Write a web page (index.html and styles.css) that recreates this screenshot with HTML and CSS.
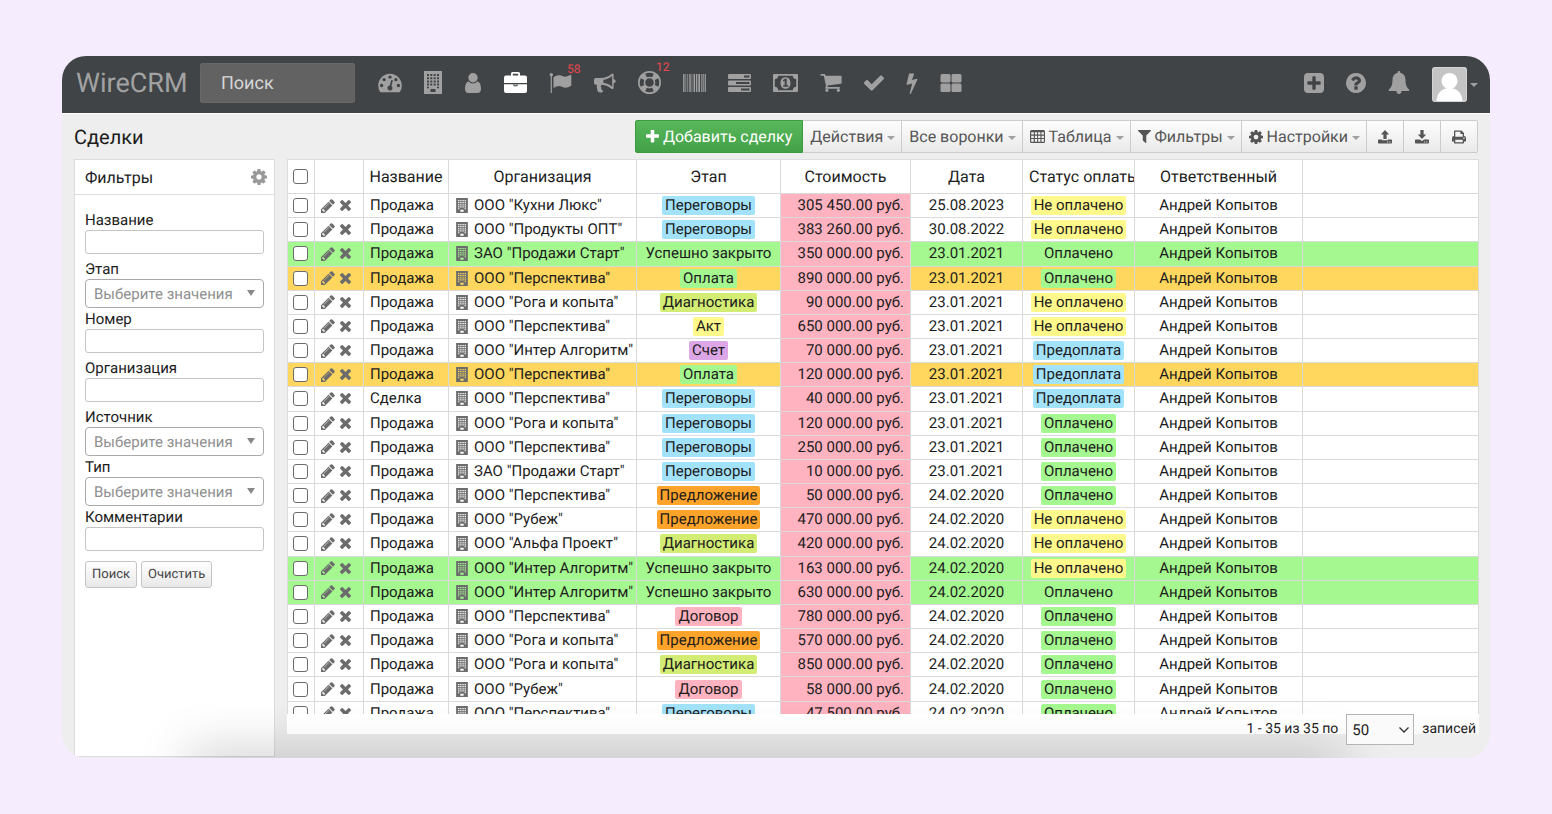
FILE: index.html
```html
<!DOCTYPE html>
<html lang="ru">
<head>
  <meta charset="UTF-8" />
  <title>WireCRM - Сделки</title>
  <meta name="viewport" content="width=device-width, initial-scale=1.0" />
  <link rel="stylesheet" href="styles.css">
</head>
<body>

<!-- Иконки -->
<svg class="sprite" aria-hidden="true">
  <symbol id="i-gauge" viewBox="0 200 1792 1520"><path d="M384 1152q0-53-37.5-90.5t-90.5-37.5-90.5 37.5-37.5 90.5 37.5 90.5 90.5 37.5 90.5-37.5 37.5-90.5zm192-448q0-53-37.5-90.5t-90.5-37.5-90.5 37.5-37.5 90.5 37.5 90.5 90.5 37.5 90.5-37.5 37.5-90.5zm428 481l101-382q6-26-7.5-48.5t-38.5-29.5-48 6.5-30 39.5l-101 382q-60 5-107 43.5t-63 98.5q-20 77 20 146t117 89 146-20 89-117q16-60-6-117t-72-91zm660-33q0-53-37.5-90.5t-90.5-37.5-90.5 37.5-37.5 90.5 37.5 90.5 90.5 37.5 90.5-37.5 37.5-90.5zm-640-640q0-53-37.5-90.5t-90.5-37.5-90.5 37.5-37.5 90.5 37.5 90.5 90.5 37.5 90.5-37.5 37.5-90.5zm448 192q0-53-37.5-90.5t-90.5-37.5-90.5 37.5-37.5 90.5 37.5 90.5 90.5 37.5 90.5-37.5 37.5-90.5zm320 448q0 261-141 483-19 29-54 29h-1402q-35 0-54-29-141-221-141-483 0-182 71-348t191-286 286-191 348-71 348 71 286 191 191 286 71 348z"/></symbol>
  <symbol id="i-building" viewBox="0 0 18 23"><path fill-rule="evenodd" d="M0 0h18v23H0zM3 3v2h2V3zm3.300 0v2h2V3zm3.400 0v2h2V3zM13 3v2h2V3zM3 6.200v2h2v-2zm3.300 0v2h2v-2zm3.400 0v2h2v-2zm3.300 0v2h2v-2zM3 9.400v2h2v-2zm3.300 0v2h2v-2zm3.400 0v2h2v-2zm3.300 0v2h2v-2zM3 12.600v2h2v-2zm3.300 0v2h2v-2zm3.400 0v2h2v-2zm3.300 0v2h2v-2zM3 15.800v1.500h2v-1.500zm10 0v1.500h2v-1.500zM6.500 18v3h5v-3z"/></symbol>
  <symbol id="i-user" viewBox="0 0 16 20"><circle cx="8" cy="4.700" r="4.700"/><path d="M3.600 8.300C1.200 9 0 12 0 15.500 0 18.500 1.200 20 3.500 20h9c2.300 0 3.500-1.500 3.500-4.500 0-3.500-1.200-6.500-3.600-7.200C11.300 9.700 9.800 10.500 8 10.500s-3.300-.8-4.400-2.200z"/></symbol>
  <symbol id="i-case" viewBox="0 0 23 21"><path fill-rule="evenodd" d="M7 3.500V1.500Q7 0 8.500 0h6Q16 0 16 1.500v2h5q2 0 2 2V11H0V5.500q0-2 2-2zm1.800 0h5.400V1.800H8.800zM0 12.300h9.500v2h4v-2H23V19q0 2-2 2H2q-2 0-2-2zm10.500 0h2v1h-2z"/></symbol>
  <symbol id="i-flag" viewBox="0 0 22 20"><circle cx="1.800" cy="1.800" r="1.700"/><path d="M1.200 2h1.200v18H1.200zM4 4.200C6.500 2.500 9 1.600 11.500 2.600c2.500 1.200 4.500 1.600 7.500.2l1.800-.9q1-.3 1 .8v10c-3.500 2.200-6.300 2.600-9.300 1.100-2.800-1.400-5.200-.9-8.500 1.200z"/></symbol>
  <symbol id="i-horn" viewBox="0 0 23 20"><path fill-rule="evenodd" d="M20.500 6.200q2.200 0 2.200 2t-2.200 2V15q0 1.500-1.500 1.500C15.500 13.600 12 12 8.200 11.700c-1.400.8-1.400 2-.3 3.200-.8 1.300.2 2.400 1.800 3.500-1 2-4.200 1.900-5.600.7C3.300 16.500 2.500 14.500 3.100 11.700H2q-2 0-2-2v-3q0-2 2-2h5C12 4.700 15.500 3 19 0q1.500 0 1.500 1.500zM19 2.600c-3 2.300-6 3.600-9.200 4v3.200c3.200.4 6.200 1.700 9.200 4z"/></symbol>
  <symbol id="i-ring" viewBox="0 0 24 24"><path fill-rule="evenodd" d="M12 0a12 12 0 1 0 0 24 12 12 0 0 0 0-24zm0 7.500a4.500 4.500 0 1 1 0 9 4.500 4.500 0 0 1 0-9zM7.500 2.900Q12 .8 16.500 2.900L14.700 6.500Q12 5.400 9.300 6.500zm0 18.200Q12 23.200 16.500 21.100l-1.800-3.600q-2.700 1.100-5.400 0zM2.900 7.500Q.8 12 2.900 16.500l3.600-1.800q-1.100-2.700 0-5.400zm18.200 0Q23.200 12 21.100 16.500l-3.600-1.800q1.100-2.700 0-5.400z"/></symbol>
  <symbol id="i-barcode" viewBox="0 0 24 19"><path d="M0 0h1.500v19H0zM2.500 0h.8v19h-.8zM4.500 0h.8v19h-.8zM6.500 0H8v19H6.500zM9 0h.7v19H9zM11 0h1.500v19H11zM13.500 0h1.500v19h-1.500zM16 0h1.800v19H16zM18.800 0h.8v19h-.8zM20.500 0h1.200v19h-1.200zM22.700 0H24v19h-1.300z"/></symbol>
  <symbol id="i-tasks" viewBox="0 0 23 18"><path fill-rule="evenodd" d="M1 0h21q1 0 1 1v3q0 1-1 1H1Q0 5 0 4V1q0-1 1-1zm15 1.600v1.800h5.500V1.600zM1 6.500h21q1 0 1 1v3q0 1-1 1H1q-1 0-1-1v-3q0-1 1-1zm7 1.600v1.800h13.500V8.100zM1 13h21q1 0 1 1v3q0 1-1 1H1q-1 0-1-1v-3q0-1 1-1zm12 1.600v1.800h8.500v-1.800z"/></symbol>
  <symbol id="i-money" viewBox="0 0 25 18"><path fill-rule="evenodd" d="M1 0h23q1 0 1 1v16q0 1-1 1H1q-1 0-1-1V1q0-1 1-1zm4.200 1.800Q5 5 1.800 5.200v7.600Q5 13 5.200 16.200h14.600q.2-3.200 3.400-3.400V5.200Q20 5 19.800 1.800zM12.500 3.200c3.500 0 5 3 5 5.800s-1.500 5.800-5 5.800-5-3-5-5.800 1.500-5.800 5-5.800zm-2.800 3 1 1.200 1-.7v4.500h-1.500v1.500h5v-1.500h-1.500V4.700h-1.800z"/></symbol>
  <symbol id="i-cart" viewBox="64 256 1664 1408"><path d="M704 1536q0 52-38 90t-90 38-90-38-38-90 38-90 90-38 90 38 38 90zm896 0q0 52-38 90t-90 38-90-38-38-90 38-90 90-38 90 38 38 90zm128-1088v512q0 24-16.500 42.500t-40.500 21.500l-1044 122q13 60 13 70 0 16-24 64h920q26 0 45 19t19 45-19 45-45 19h-1024q-26 0-45-19t-19-45q0-11 8-31.500t16-36 21.500-40 15.500-29.500l-177-823h-204q-26 0-45-19t-19-45 19-45 45-19h256q16 0 28.500 6.500t19.500 15.500 13 24.500 8 26 5.500 29.500 4.500 26h1201q26 0 45 19t19 45z"/></symbol>
  <symbol id="i-check" viewBox="121 334 1550 1188"><path d="M1671 566q0 40-28 68l-724 724-136 136q-28 28-68 28t-68-28l-136-136-362-362q-28-28-28-68t28-68l136-136q28-28 68-28t68 28l294 295 656-657q28-28 68-28t68 28l136 136q28 28 28 68z"/></symbol>
  <symbol id="i-bolt" viewBox="440 0 910 1792"><path d="M1333 566q18 20 7 44l-540 1157q-13 25-42 25-4 0-14-2-17-5-25.500-19t-4.500-30l197-808-406 101q-4 1-12 1-18 0-31-11-18-15-13-39l201-825q4-14 16-23t28-9h328q19 0 32 12.500t13 29.500q0 8-5 18l-171 463 396-98q8-2 12-2 19 0 34 15z"/></symbol>
  <symbol id="i-tiles" viewBox="0 0 21 18"><rect width="10" height="8.500" rx="1.500"/><rect x="11" width="10" height="8.500" rx="1.500"/><rect y="9.500" width="10" height="8.500" rx="1.500"/><rect x="11" y="9.500" width="10" height="8.500" rx="1.500"/></symbol>
  <symbol id="i-plus-square" viewBox="128 128 1536 1536"><path d="M1408 960v-128q0-26-19-45t-45-19h-320v-320q0-26-19-45t-45-19h-128q-26 0-45 19t-19 45v320h-320q-26 0-45 19t-19 45v128q0 26 19 45t45 19h320v320q0 26 19 45t45 19h128q26 0 45-19t19-45v-320h320q26 0 45-19t19-45zm256-544v960q0 119-84.500 203.500t-203.500 84.500h-960q-119 0-203.500-84.500t-84.500-203.500v-960q0-119 84.500-203.500t203.500-84.500h960q119 0 203.500 84.500t84.500 203.500z"/></symbol>
  <symbol id="i-help" viewBox="128 128 1536 1536"><path d="M1024 1376v-192q0-14-9-23t-23-9h-192q-14 0-23 9t-9 23v192q0 14 9 23t23 9h192q14 0 23-9t9-23zm256-672q0-88-55.500-163t-138.500-116-170-41q-243 0-371 213-15 24 8 42l132 100q7 6 19 6 16 0 25-12 53-68 86-92 34-24 86-24 48 0 85.500 26t37.500 59q0 38-20 61t-68 45q-63 28-115.500 86.500t-52.500 125.500v36q0 14 9 23t23 9h192q14 0 23-9t9-23q0-19 21.500-49.500t54.500-49.500q32-18 49-28.500t46-35 44.500-48 28-60.500 12.500-81zm384 192q0 209-103 385.500t-279.500 279.500-385.500 103-385.500-103-279.500-279.500-103-385.500 103-385.500 279.500-279.500 385.500-103 385.500 103 279.500 279.500 103 385.500z"/></symbol>
  <symbol id="i-bell" viewBox="0 0 20 22"><path d="M10 0q1.300 0 1.300 1.300v.6C14.800 2.500 16 5 16.200 8.500c.2 5 1.300 7.500 3.800 9.500q0 1.200-1.200 1.200H12.500Q12.200 22 10 22t-2.500-2.800H1.200Q0 19.200 0 18c2.500-2 3.600-4.500 3.800-9.500C4 5 5.200 2.500 8.700 1.900v-.6Q8.700 0 10 0z"/></symbol>
  <symbol id="i-plus" viewBox="192 192 1408 1408"><path d="M1600 736v192q0 40-28 68t-68 28h-416v416q0 40-28 68t-68 28h-192q-40 0-68-28t-28-68v-416h-416q-40 0-68-28t-28-68v-192q0-40 28-68t68-28h416v-416q0-40 28-68t68-28h192q40 0 68 28t28 68v416h416q40 0 68 28t28 68z"/></symbol>
  <symbol id="i-table" viewBox="0 0 15 13"><path fill-rule="evenodd" d="M1.500 0h12Q15 0 15 1.500v10q0 1.500-1.500 1.500h-12Q0 13 0 11.500v-10Q0 0 1.500 0zM1.200 2.300v2.300h2.500V2.300zm3.700 0v2.300h2.200V2.300zm3.200 0v2.300h2.300V2.300zm3.400 0v2.300h2.400V2.300zM1.200 5.700V8h2.500V5.700zm3.700 0V8h2.200V5.700zm3.200 0V8h2.300V5.700zm3.400 0V8h2.400V5.700zM1.200 9.100v2.600h2.500V9.100zm3.700 0v2.600h2.200V9.100zm3.200 0v2.600h2.300V9.100zm3.400 0v2.600h2.400V9.100z"/></symbol>
  <symbol id="i-filter" viewBox="192 256 1408 1408"><path d="M1595 295q17 41-14 70l-493 493v742q0 42-39 59-13 5-25 5-27 0-45-19l-256-256q-19-19-19-45v-486l-493-493q-31-29-14-70 17-39 59-39h1280q42 0 59 39z"/></symbol>
  <symbol id="i-cog" viewBox="128 128 1536 1536"><path d="M1152 896q0-106-75-181t-181-75-181 75-75 181 75 181 181 75 181-75 75-181zm512-109v222q0 12-8 23t-20 13l-185 28q-19 54-39 91 35 50 107 138 10 12 10 25t-9 23q-27 37-99 108t-94 71q-12 0-26-9l-138-108q-44 23-91 38-16 136-29 186-7 28-36 28h-222q-14 0-24.500-8.500t-11.500-21.500l-28-184q-49-16-90-37l-141 107q-10 9-25 9-14 0-25-11-126-114-165-168-7-10-7-23 0-12 8-23 15-21 51-66.500t54-70.500q-27-50-41-99l-183-27q-13-2-21-12.500t-8-23.500v-222q0-12 8-23t19-13l186-28q14-46 39-92-40-57-107-138-10-12-10-24 0-10 9-23 26-36 98.500-107.500t94.500-71.500q13 0 26 10l138 107q44-23 91-38 16-136 29-186 7-28 36-28h222q14 0 24.500 8.500t11.500 21.500l28 184q49 16 90 37l142-107q9-9 24-9 13 0 25 10 129 119 165 170 7 8 7 22 0 12-8 23-15 21-51 66.500t-54 70.500q26 50 41 98l183 28q13 2 21 12.500t8 23.500z"/></symbol>
  <symbol id="i-upload" viewBox="0 0 14 14"><path fill-rule="evenodd" d="M7 0l4.200 4.500H8.600V9H5.400V4.500H2.800zM.8 9.500h3.400v.8h5.600v-.8h3.400q.8 0 .8.800v2.500q0 .8-.8.800H.8q-.8 0-.8-.8v-2.500q0-.8.8-.8zm8.400 2v1h1v-1zm2.200 0v1h1v-1z"/></symbol>
  <symbol id="i-download" viewBox="0 0 14 14"><path fill-rule="evenodd" d="M5.400 0h3.200v4.500h2.600L7 9 2.800 4.500h2.600zM.8 9.500h4l2.200 1.500 2.200-1.500h4q.8 0 .8.800v2.500q0 .8-.8.800H.8q-.8 0-.8-.8v-2.500q0-.8.8-.8zm8.400 2v1h1v-1zm2.200 0v1h1v-1z"/></symbol>
  <symbol id="i-print" viewBox="0 0 14 14"><path fill-rule="evenodd" d="M2 6V1.200Q2 .5 2.700.5H9.500L12 3v3q2 .2 2 2v3.200q0 .3-.3.300H12v1.300q0 .7-.7.7H2.700Q2 13.500 2 12.800v-1.300H.3Q0 11.500 0 11.200V8q0-1.800 2-2zm1.300.8h7.400V4H9q-.6 0-.6-.6V1.800H3.300zm0 3v2.400h7.400V9.800zm8-2.300v1.200h1.300V7.500z"/></symbol>
  <symbol id="i-pencil" viewBox="128 128 1536 1536"><path d="M491 1536l91-91-235-235-91 91v107h128v128h107zm523-928q0-22-22-22-10 0-17 7l-542 542q-7 7-7 17 0 22 22 22 10 0 17-7l542-542q7-7 7-17zm-54-192l416 416-832 832h-416v-416zm683 96q0 53-37 90l-166 166-416-416 166-165q36-38 90-38 53 0 91 38l235 234q37 39 37 91z"/></symbol>
  <symbol id="i-times" viewBox="302 366 1188 1188"><path d="M1490 1322q0 40-28 68l-136 136q-28 28-68 28t-68-28l-294-294-294 294q-28 28-68 28t-68-28l-136-136q-28-28-28-68t28-68l294-294-294-294q-28-28-28-68t28-68l136-136q28-28 68-28t68 28l294 294 294-294q28-28 68-28t68 28l136 136q28 28 28 68t-28 68l-294 294 294 294q28 28 28 68z"/></symbol>
</svg>

<div class="window">
  <header class="topbar">
    <a href="#" class="logo">WireCRM</a>
    <input type="search" class="search" placeholder="Поиск" aria-label="Поиск" />

    <nav class="menu">
      <a href="#" aria-label="Рабочий стол"><svg width="24" height="20"><use href="#i-gauge"/></svg></a>
      <a href="#" aria-label="Организации"><svg width="18" height="23"><use href="#i-building"/></svg></a>
      <a href="#" aria-label="Контакты"><svg width="18" height="20"><use href="#i-user"/></svg></a>
      <a href="#" class="active" aria-label="Сделки"><svg width="23" height="23"><use href="#i-case"/></svg></a>
      <a href="#" aria-label="Задачи"><svg width="23" height="20"><use href="#i-flag"/></svg><span class="badge">58</span></a>
      <a href="#" aria-label="Маркетинг"><svg width="22" height="20"><use href="#i-horn"/></svg></a>
      <a href="#" aria-label="Поддержка"><svg width="23" height="23"><use href="#i-ring"/></svg><span class="badge">12</span></a>
      <a href="#" aria-label="Товары"><svg width="23" height="18"><use href="#i-barcode"/></svg></a>
      <a href="#" aria-label="Проекты"><svg width="23" height="18"><use href="#i-tasks"/></svg></a>
      <a href="#" aria-label="Финансы"><svg width="25" height="18"><use href="#i-money"/></svg></a>
      <a href="#" aria-label="Заказы"><svg width="22" height="18"><use href="#i-cart"/></svg></a>
      <a href="#" aria-label="Дела"><svg width="20" height="16"><use href="#i-check"/></svg></a>
      <a href="#" aria-label="Автоматизация"><svg width="12" height="22"><use href="#i-bolt"/></svg></a>
      <a href="#" aria-label="Приложения"><svg width="22" height="18"><use href="#i-tiles"/></svg></a>
    </nav>

    <div class="user-menu">
      <a href="#" aria-label="Добавить"><svg width="20" height="20"><use href="#i-plus-square"/></svg></a>
      <a href="#" aria-label="Помощь"><svg width="20" height="20"><use href="#i-help"/></svg></a>
      <a href="#" aria-label="Уведомления"><svg width="22" height="23"><use href="#i-bell"/></svg></a>
      <button type="button" class="profile" aria-label="Профиль">
        <svg class="avatar" width="35" height="35" viewBox="0 0 35 35"><rect width="35" height="35" rx="3" fill="#c4c4c4"/><circle cx="17.500" cy="14" r="8" fill="#fff"/><path d="M4.500 34C5 26 10 21 17.500 21S30 26 30.500 34z" fill="#fff"/><rect x=".5" y=".5" width="34" height="34" rx="3" fill="none" stroke="#d4d4d4"/></svg>
        <span class="caret"></span>
      </button>
    </div>
  </header>

  <div class="page">
    <div class="page-head">
      <h1>Сделки</h1>
      <div class="toolbar">
        <button type="button" class="btn btn-add"><svg width="13" height="13"><use href="#i-plus"/></svg>Добавить сделку</button>
        <button type="button" class="btn">Действия<span class="caret"></span></button>
        <button type="button" class="btn">Все воронки<span class="caret"></span></button>
        <button type="button" class="btn"><svg width="15" height="13"><use href="#i-table"/></svg>Таблица<span class="caret"></span></button>
        <button type="button" class="btn"><svg width="13" height="13"><use href="#i-filter"/></svg>Фильтры<span class="caret"></span></button>
        <button type="button" class="btn"><svg width="14" height="14"><use href="#i-cog"/></svg>Настройки<span class="caret"></span></button>
        <button type="button" class="btn btn-icon" aria-label="Импорт"><svg width="14" height="14"><use href="#i-upload"/></svg></button>
        <button type="button" class="btn btn-icon" aria-label="Экспорт"><svg width="14" height="14"><use href="#i-download"/></svg></button>
        <button type="button" class="btn btn-icon" aria-label="Печать"><svg width="14" height="14"><use href="#i-print"/></svg></button>
      </div>
    </div>

    <div class="content">
      <!-- Фильтры -->
      <aside class="filters">
        <div class="filters-head">
          <h2>Фильтры</h2>
          <button type="button" class="cog" aria-label="Настройка фильтров"><svg width="16" height="16"><use href="#i-cog"/></svg></button>
        </div>
        <form class="filters-form">
          <div class="field">
            <label for="f-name">Название</label>
            <input type="text" id="f-name" />
          </div>
          <div class="field field-select">
            <label for="f-stage">Этап</label>
            <select id="f-stage"><option>Выберите значения</option></select>
          </div>
          <div class="field">
            <label for="f-number">Номер</label>
            <input type="text" id="f-number" />
          </div>
          <div class="field">
            <label for="f-org">Организация</label>
            <input type="text" id="f-org" />
          </div>
          <div class="field field-select">
            <label for="f-source">Источник</label>
            <select id="f-source"><option>Выберите значения</option></select>
          </div>
          <div class="field field-select">
            <label for="f-type">Тип</label>
            <select id="f-type"><option>Выберите значения</option></select>
          </div>
          <div class="field">
            <label for="f-comment">Комментарии</label>
            <input type="text" id="f-comment" />
          </div>
          <div class="filters-buttons">
            <button type="button">Поиск</button>
            <button type="reset">Очистить</button>
          </div>
        </form>
      </aside>

      <!-- Список сделок -->
      <section class="deals">
        <div class="table-wrap">
          <table>
            <colgroup>
              <col class="c-check"><col class="c-actions"><col class="c-name"><col class="c-org"><col class="c-stage">
              <col class="c-cost"><col class="c-date"><col class="c-status"><col class="c-owner"><col>
            </colgroup>
            <thead>
              <tr>
                <th><input type="checkbox" aria-label="Выбрать все" /></th>
                <th></th>
                <th>Название</th>
                <th>Организация</th>
                <th>Этап</th>
                <th>Стоимость</th>
                <th>Дата</th>
                <th class="left">Статус оплаты</th>
                <th>Ответственный</th>
                <th></th>
              </tr>
            </thead>
            <tbody id="deals"></tbody>
          </table>
        </div>
        <div class="pager">
          <label for="per-page">1 - 35 из 35 по</label>
          <div class="pager-select">
            <select id="per-page"><option>50</option><option>100</option></select>
            <svg width="10" height="6" viewBox="0 0 10 6"><path d="M.5.500 5 5 9.500.500" fill="none" stroke="#333" stroke-width="1.300"/></svg>
          </div>
          <span>записей</span>
        </div>
      </section>
    </div>
  </div>
</div>

<script src="script.js"></script>
</body>
</html>
```

FILE: styles.css
```css
* {
  box-sizing: border-box;
}

body {
  margin: 0;
  padding: 56px 62px;
  min-height: 100vh;
  display: flex;
  background: #f5edfe;
  font-family: Roboto, "Liberation Sans", sans-serif;
  font-size: 15px;
  color: #1c1c1c;
  text-rendering: geometricPrecision;
}

h1, h2 {
  margin: 0;
  font-weight: normal;
}

button, input, select {
  font-family: inherit;
  text-rendering: inherit;
  margin: 0;
}

button {
  cursor: pointer;
}

svg {
  display: block;
  fill: currentColor;
}

.sprite {
  position: absolute;
  width: 0;
  height: 0;
}

.window {
  position: relative;
  flex: 1;
  min-width: 0;
  height: calc(100vh - 112px);
  min-height: 600px;
  display: flex;
  flex-direction: column;
  border-radius: 24px;
  overflow: hidden;
  background: #eee;
}

/* soft shade along the bottom edge */
.window::after {
  content: "";
  position: absolute;
  top: 100%;
  left: 130px;
  right: 150px;
  height: 20px;
  box-shadow: 0 0 50px 4px rgba(0, 0, 0, 0.26);
  pointer-events: none;
}

/* header */
.topbar {
  display: flex;
  align-items: center;
  height: 58px;
  padding: 0 12px 4px 14px;
  background: #404447;
  border-bottom: 1px solid #fff;
  flex-shrink: 0;
}

.logo {
  width: 124px;
  font-size: 27px;
  color: #a2a2a2;
  text-decoration: none;
}

.search {
  width: 155px;
  height: 40px;
  padding: 2px 20px 0;
  border: 1px solid #686868;
  border-radius: 2px;
  background: #626262;
  font-size: 18px;
  color: #fff;
}

.search::placeholder {
  color: #d6d6d6;
}

.menu, .user-menu {
  display: flex;
  align-items: center;
  gap: 22px;
}

.menu {
  margin-left: 23px;
}

.menu a, .user-menu a {
  position: relative;
  color: #a0a0a0;
}

.menu .active {
  color: #fff;
}

.badge {
  position: absolute;
  left: 18px;
  top: -10px;
  font-size: 12px;
  line-height: 12px;
  color: #e8484f;
}

.user-menu {
  margin-left: auto;
}

.profile {
  display: flex;
  align-items: center;
  gap: 3px;
  padding: 4px 0 0;
  border: 0;
  background: none;
}

.caret {
  border: 4px solid transparent;
  border-top-color: #a0a0a0;
  border-bottom: 0;
}

/* title and buttons */
.page {
  flex: 1;
  min-height: 0;
  display: flex;
  flex-direction: column;
  padding: 6px 11px 0 12px;
}

.page-head {
  display: flex;
  justify-content: space-between;
  align-items: center;
  height: 33px;
  margin-bottom: 6px;
}

h1 {
  font-size: 20px;
}

.toolbar {
  display: flex;
  padding-right: 1px;
}

.btn {
  display: flex;
  align-items: center;
  gap: 4px;
  height: 33px;
  padding: 0 6px 0 7px;
  border: 1px solid #ccc;
  border-left-width: 0;
  background: linear-gradient(#fdfdfd, #e9e9e9);
  font-size: 16px;
  color: #555;
  white-space: nowrap;
}

.btn .caret {
  margin-top: 3px;
}

.btn-add {
  padding: 0 10px;
  border: 1px solid #3c9a40;
  border-radius: 2px 0 0 2px;
  background: linear-gradient(#58b85b, #43a047);
  color: #fff;
}

.btn-icon {
  width: 37px;
  padding: 0;
  justify-content: center;
}

.btn-icon:last-child {
  border-radius: 0 2px 2px 0;
}

.content {
  flex: 1;
  min-height: 0;
  display: flex;
  gap: 12px;
}

/* filters */
.filters {
  width: 201px;
  flex-shrink: 0;
  margin-bottom: 1px;
  border: 1px solid #ddd;
  background: #fff;
}

.filters-head {
  display: flex;
  justify-content: space-between;
  align-items: center;
  height: 35px;
  padding: 0 7px 0 10px;
  border-bottom: 1px solid #ddd;
}

h2 {
  font-size: 16px;
}

.cog {
  padding: 0;
  border: 0;
  background: none;
  color: #999;
}

.filters-form {
  padding: 16px 10px;
}

.field {
  height: 49px;
}

.field label {
  display: block;
  margin-bottom: 1px;
  line-height: 18px;
}

.field input, .field select {
  display: block;
  width: 100%;
  height: 24px;
  border: 1px solid #c4c4c4;
  border-radius: 3px;
  background: #fff;
}

.field select {
  height: 29px;
  padding: 0 8px;
  border-color: #aaa;
  border-radius: 4px;
  appearance: none;
  font-size: 15px;
  color: #8f8f8f;
}

.field-select {
  position: relative;
  height: 50px;
}

.field-select::after {
  content: "";
  position: absolute;
  right: 9px;
  bottom: 14px;
  border: 4px solid transparent;
  border-top: 6px solid #888;
  border-bottom: 0;
  pointer-events: none;
}

.filters-buttons {
  display: flex;
  gap: 4px;
  padding-top: 4px;
}

.filters-buttons button {
  height: 27px;
  padding: 0 6px;
  border: 1px solid #c4c4c4;
  border-radius: 3px;
  background: linear-gradient(#fff, #e8e8e8);
  font-size: 13px;
  color: #444;
}

/* deals */
.deals {
  flex: 1;
  min-width: 0;
  display: flex;
  flex-direction: column;
  padding-bottom: 24px;
}

.table-wrap {
  flex: 1;
  min-height: 0;
  overflow: hidden;
  border: 1px solid #ddd;
  border-width: 1px 0 0 1px;
  background: #fff;
}

table {
  width: 100%;
  height: 566px;
  table-layout: fixed;
  border-collapse: separate;
  border-spacing: 0;
}

.c-check { width: 27px; }
.c-actions { width: 49px; }
.c-name { width: 85px; }
.c-org { width: 188px; }
.c-stage { width: 144px; }
.c-cost { width: 130px; }
.c-date { width: 112px; }
.c-status { width: 112px; }
.c-owner { width: 168px; }

th, td {
  padding: 0;
  border: 1px solid #dadada;
  border-width: 0 1px 1px 0;
  text-align: center;
  white-space: nowrap;
  overflow: hidden;
}

th {
  height: 34px;
  font-size: 16px;
  font-weight: normal;
}

td {
  line-height: 19px;
}

th.left, td.left {
  padding-left: 6px;
  text-align: left;
}

td.cost {
  padding-right: 6px;
  background: #ffb3c0;
  text-align: right;
}

tr.green { background: #a5f88f; }
tr.orange { background: #ffd75e; }

input[type="checkbox"] {
  appearance: none;
  display: block;
  width: 15px;
  height: 15px;
  margin: 0 0 0 5px;
  border: 1px solid #6b6b6b;
  border-radius: 3px;
  background: #fff;
}

.actions {
  display: flex;
  align-items: center;
  gap: 5px;
  padding-left: 6px;
}

.actions button {
  padding: 0;
  border: 0;
  background: none;
  color: #6c6c6c;
}

.org {
  display: flex;
  align-items: center;
  gap: 6px;
  padding-left: 7px;
}

.org svg {
  color: #6c6c6c;
}

.tag {
  display: inline-block;
  padding: 0 3px;
  border-radius: 2px;
}

.tag.blue { background: #a3e2fb; }
.tag.lime { background: #a5f88f; }
.tag.olive { background: #d2ec74; }
.tag.yellow { background: #fff98c; }
.tag.violet { background: #dda6e6; }
.tag.amber { background: #ffa32b; }
.tag.pink { background: #ffb3c0; }

.pager {
  position: relative;
  z-index: 1;
  display: flex;
  justify-content: flex-end;
  gap: 8px;
  height: 20px;
  padding-right: 3px;
  background: linear-gradient(#fff, #fafafa);
  font-size: 14px;
  line-height: 30px;
}

.pager-select {
  position: relative;
  width: 68px;
  height: 31px;
}

.pager-select select {
  width: 100%;
  height: 100%;
  padding: 0 5px;
  appearance: none;
  border: 1px solid #b4b4b4;
  border-radius: 0;
  background: #fafafa;
  font-size: 15px;
  color: #1c1c1c;
}

.pager-select svg {
  position: absolute;
  right: 5px;
  top: 13px;
  pointer-events: none;
}
```

FILE: script.js
```js
const stages = {
  'Переговоры': 'blue',
  'Оплата': 'lime',
  'Диагностика': 'olive',
  'Акт': 'yellow',
  'Счет': 'violet',
  'Предложение': 'amber',
  'Договор': 'pink'
};

const statuses = {
  'Не оплачено': 'yellow',
  'Оплачено': 'lime',
  'Предоплата': 'blue'
};

// название, организация, этап, стоимость, дата, статус, цвет строки
const deals = [
  ['Продажа', 'ООО "Кухни Люкс"', 'Переговоры', '305 450.00', '25.08.2023', 'Не оплачено', ''],
  ['Продажа', 'ООО "Продукты ОПТ"', 'Переговоры', '383 260.00', '30.08.2022', 'Не оплачено', ''],
  ['Продажа', 'ЗАО "Продажи Старт"', 'Успешно закрыто', '350 000.00', '23.01.2021', 'Оплачено', 'green'],
  ['Продажа', 'ООО "Перспектива"', 'Оплата', '890 000.00', '23.01.2021', 'Оплачено', 'orange'],
  ['Продажа', 'ООО "Рога и копыта"', 'Диагностика', '90 000.00', '23.01.2021', 'Не оплачено', ''],
  ['Продажа', 'ООО "Перспектива"', 'Акт', '650 000.00', '23.01.2021', 'Не оплачено', ''],
  ['Продажа', 'ООО "Интер Алгоритм"', 'Счет', '70 000.00', '23.01.2021', 'Предоплата', ''],
  ['Продажа', 'ООО "Перспектива"', 'Оплата', '120 000.00', '23.01.2021', 'Предоплата', 'orange'],
  ['Сделка', 'ООО "Перспектива"', 'Переговоры', '40 000.00', '23.01.2021', 'Предоплата', ''],
  ['Продажа', 'ООО "Рога и копыта"', 'Переговоры', '120 000.00', '23.01.2021', 'Оплачено', ''],
  ['Продажа', 'ООО "Перспектива"', 'Переговоры', '250 000.00', '23.01.2021', 'Оплачено', ''],
  ['Продажа', 'ЗАО "Продажи Старт"', 'Переговоры', '10 000.00', '23.01.2021', 'Оплачено', ''],
  ['Продажа', 'ООО "Перспектива"', 'Предложение', '50 000.00', '24.02.2020', 'Оплачено', ''],
  ['Продажа', 'ООО "Рубеж"', 'Предложение', '470 000.00', '24.02.2020', 'Не оплачено', ''],
  ['Продажа', 'ООО "Альфа Проект"', 'Диагностика', '420 000.00', '24.02.2020', 'Не оплачено', ''],
  ['Продажа', 'ООО "Интер Алгоритм"', 'Успешно закрыто', '163 000.00', '24.02.2020', 'Не оплачено', 'green'],
  ['Продажа', 'ООО "Интер Алгоритм"', 'Успешно закрыто', '630 000.00', '24.02.2020', 'Оплачено', 'green'],
  ['Продажа', 'ООО "Перспектива"', 'Договор', '780 000.00', '24.02.2020', 'Оплачено', ''],
  ['Продажа', 'ООО "Рога и копыта"', 'Предложение', '570 000.00', '24.02.2020', 'Оплачено', ''],
  ['Продажа', 'ООО "Рога и копыта"', 'Диагностика', '850 000.00', '24.02.2020', 'Оплачено', ''],
  ['Продажа', 'ООО "Рубеж"', 'Договор', '58 000.00', '24.02.2020', 'Оплачено', ''],
  ['Продажа', 'ООО "Перспектива"', 'Переговоры', '47 500.00', '24.02.2020', 'Оплачено', '']
];

const icon = (name, w, h) => `<svg width="${w}" height="${h}"><use href="#i-${name}"/></svg>`;

document.getElementById('deals').innerHTML = deals.map(([name, org, stage, cost, date, status, color]) => `
  <tr class="${color}">
    <td><input type="checkbox" aria-label="Выбрать сделку" /></td>
    <td><div class="actions">
      <button type="button" aria-label="Изменить">${icon('pencil', 14, 14)}</button>
      <button type="button" aria-label="Удалить">${icon('times', 11, 11)}</button>
    </div></td>
    <td class="left">${name}</td>
    <td><div class="org">${icon('building', 12, 15)}${org}</div></td>
    <td><span class="tag ${stages[stage] || ''}">${stage}</span></td>
    <td class="cost">${cost} руб.</td>
    <td>${date}</td>
    <td><span class="tag ${statuses[status]}">${status}</span></td>
    <td>Андрей Копытов</td>
    <td></td>
  </tr>`).join('');
```
